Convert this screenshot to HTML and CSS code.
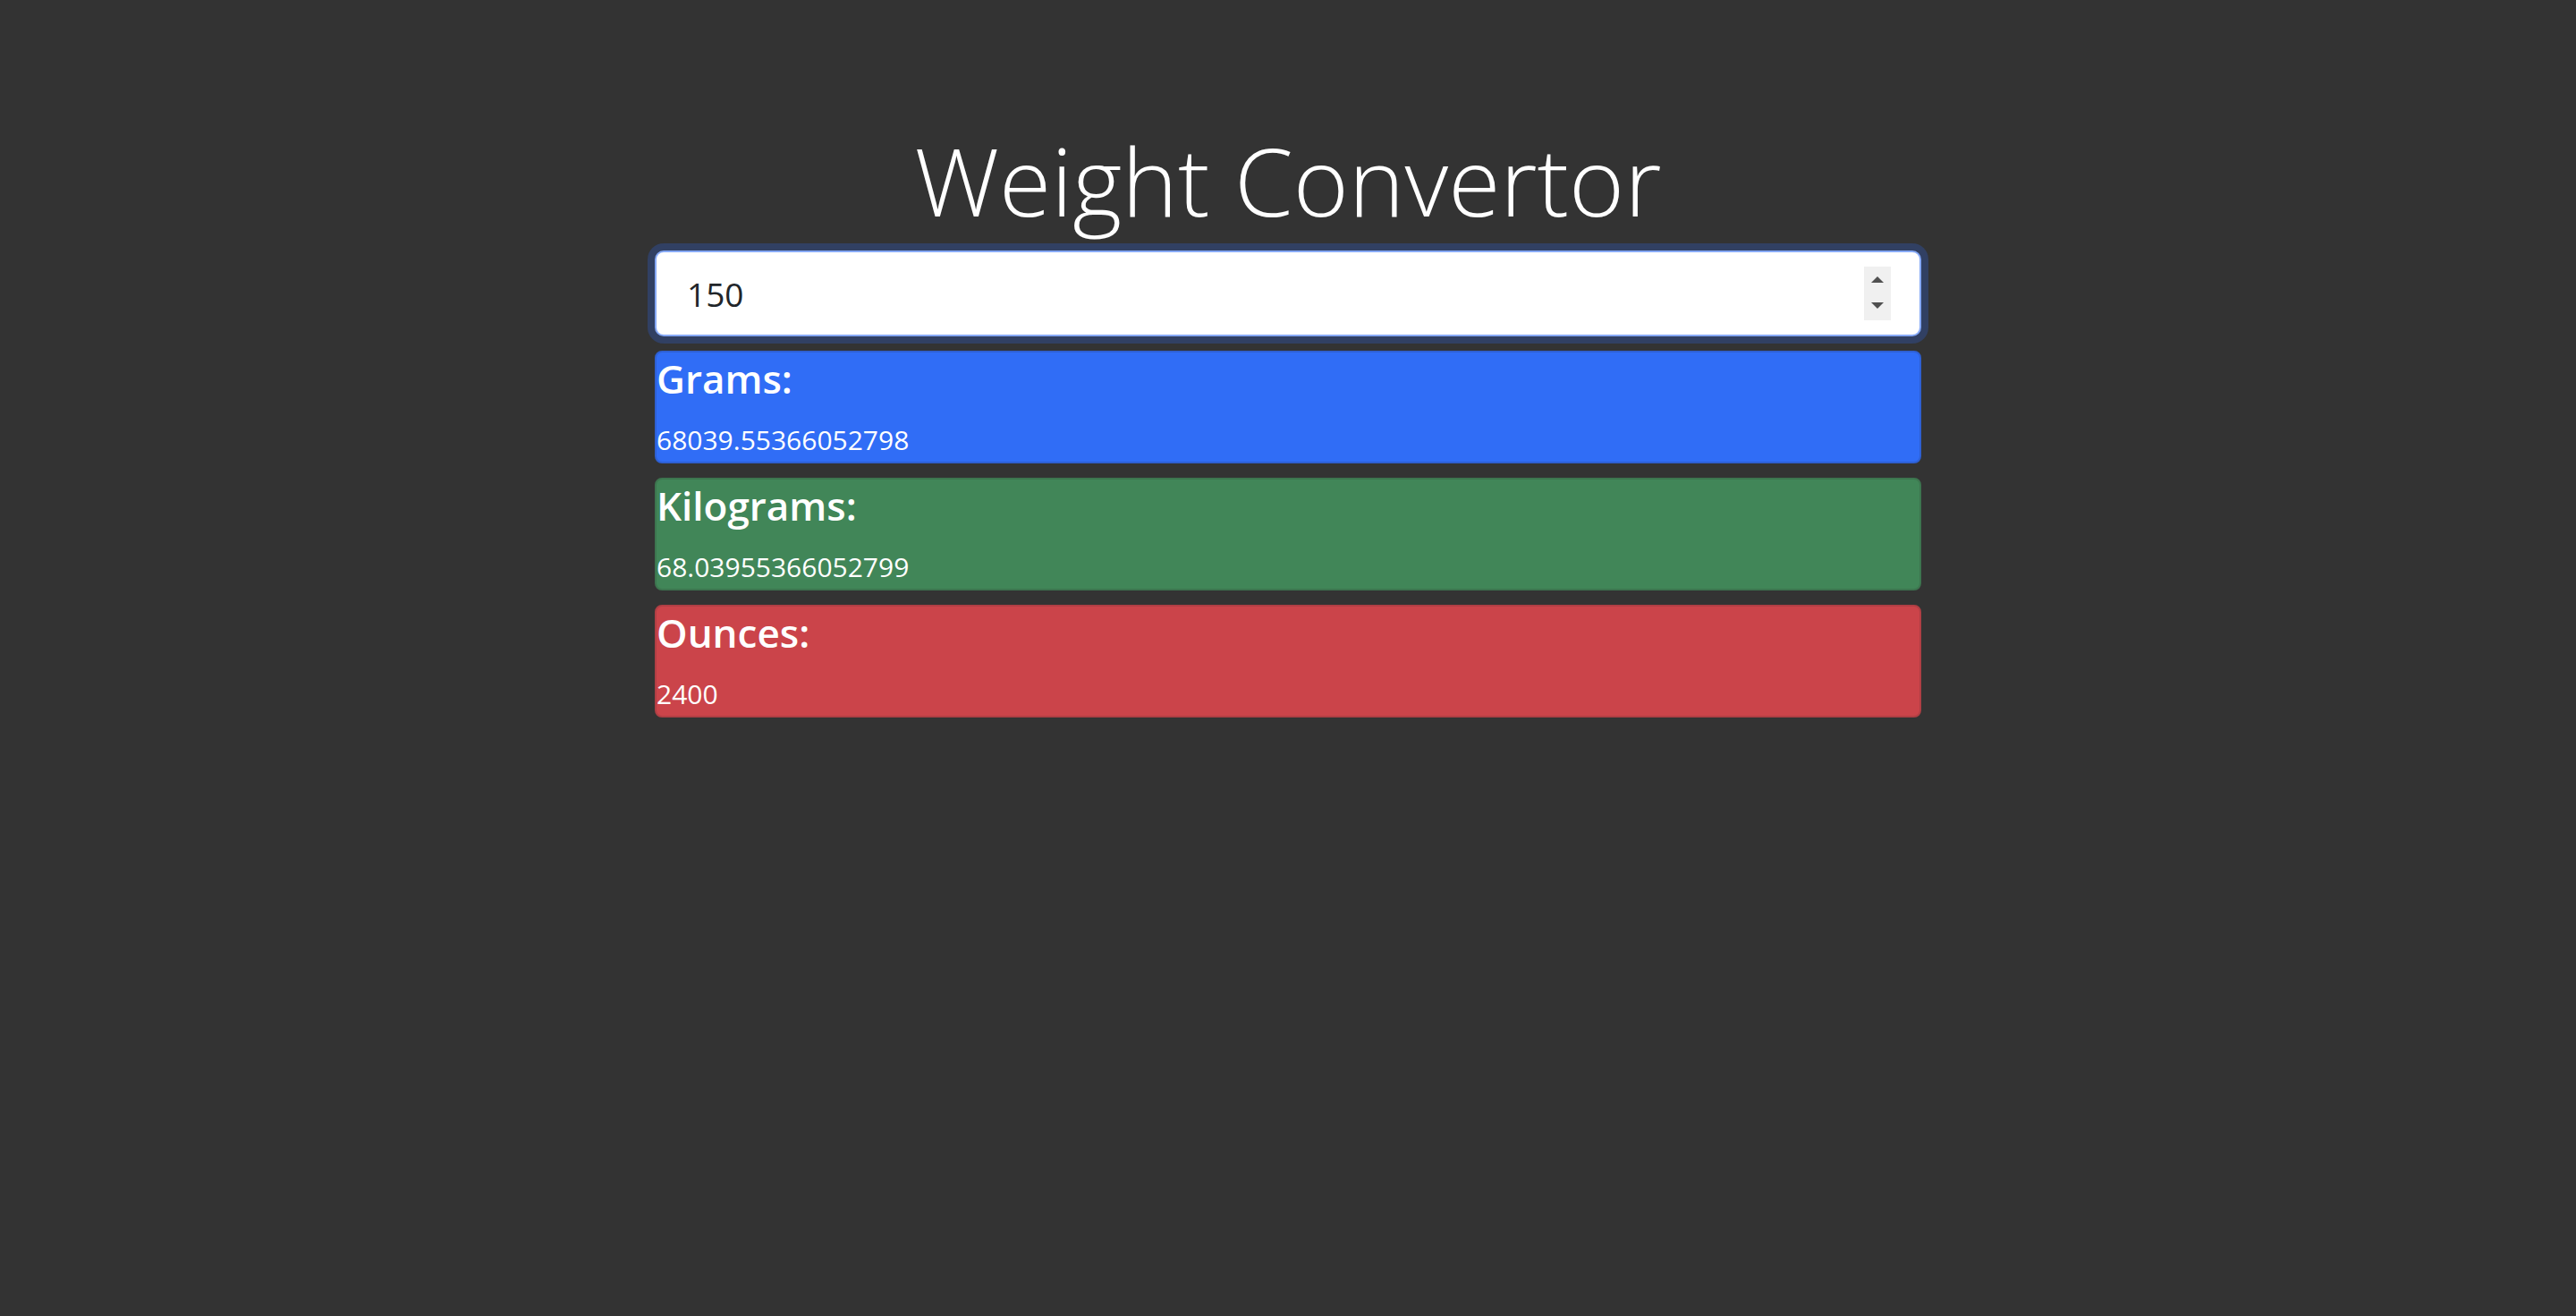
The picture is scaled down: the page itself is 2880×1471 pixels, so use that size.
FILE: index.html
```
<!DOCTYPE html>
<html lang="en">
<head>
<meta charset="utf-8">
<meta name="viewport" content="width=device-width, initial-scale=1">
<title>Weight Convertor</title>
<link rel="stylesheet" href="styles.css">
</head>
<body>
<main class="container">
  <h1 class="title">Weight Convertor</h1>
  <form class="field">
    <input class="field-input" type="number" value="150" aria-label="Weight in pounds">
    <div class="stepper">
      <button class="step" type="button" aria-label="Increase"><svg class="arrow" viewBox="0 0 14 7"><path d="M0 7 7 0l7 7z"/></svg></button>
      <button class="step" type="button" aria-label="Decrease"><svg class="arrow" viewBox="0 0 14 7"><path d="M0 0h14L7 7z"/></svg></button>
    </div>
  </form>
  <section class="card card-grams">
    <h2 class="card-title">Grams:</h2>
    <div class="card-value">68039.55366052798</div>
  </section>
  <section class="card card-kilograms">
    <h2 class="card-title">Kilograms:</h2>
    <div class="card-value">68.03955366052799</div>
  </section>
  <section class="card card-ounces">
    <h2 class="card-title">Ounces:</h2>
    <div class="card-value">2400</div>
  </section>
</main>
</body>
</html>
```
FILE: styles.css
```
* {
  box-sizing: border-box;
}

body {
  margin: 0;
  background: #333;
  color: #fff;
  font-family: "Open Sans", "Noto Sans", sans-serif;
}

.container {
  display: flex;
  flex-direction: column;
  gap: 16px;
  width: 50%;
  margin: 0 auto;
  padding: 136px 12px 0;
}

.title {
  margin: 0;
  padding-top: 2px;
  font-size: 106px;
  font-weight: 300;
  line-height: 126px;
  text-align: center;
}

.field {
  display: flex;
  align-items: center;
  height: 96px;
  padding: 0 32px 0 34px;
  border: 2px solid #86a9f6;
  border-radius: 10px;
  background: #fff;
  box-shadow: 0 0 0 8px #314063;
}

.field-input {
  flex: 1;
  min-width: 0;
  padding: 2px 0 0;
  border: 0;
  outline: 0;
  background: transparent;
  color: #212529;
  font: 37px/60px "Open Sans", "Noto Sans", sans-serif;
  appearance: textfield;
}

.field-input::-webkit-inner-spin-button {
  display: none;
}

.stepper {
  display: flex;
  flex-direction: column;
  width: 30px;
  height: 60px;
  padding: 0 0 2px;
  background: #f0f0f0;
}

.step {
  display: flex;
  flex: 1;
  align-items: center;
  justify-content: center;
  padding: 0;
  border: 0;
  background: transparent;
}

.arrow {
  width: 14px;
  height: 7px;
  fill: #505050;
}

.card {
  border: 2px solid;
  border-radius: 8px;
}

.card-grams {
  background: #306df6;
  border-color: #2e60d3;
}

.card-kilograms {
  background: #418658;
  border-color: #3d754f;
}

.card-ounces {
  background: #cb444a;
  border-color: #b03f44;
}

.card-title {
  margin: 0 0 16px;
  font-size: 44px;
  font-weight: 600;
  line-height: 58px;
}

.card-value {
  font-size: 30px;
  line-height: 48px;
}
```
